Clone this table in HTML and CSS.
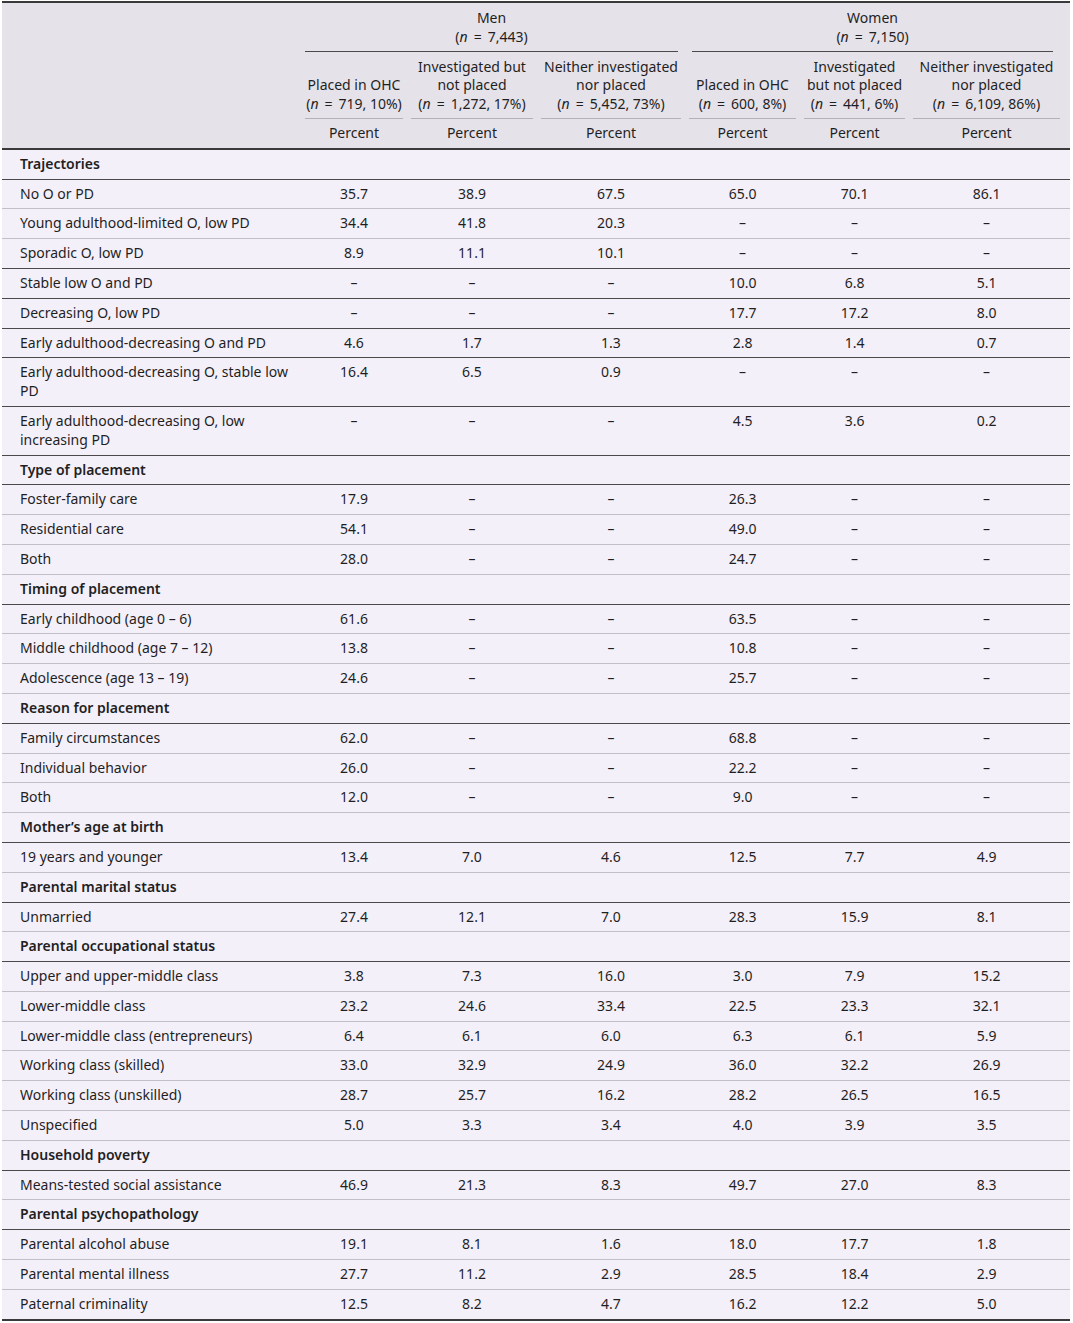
FILE: index.html
```html
<!DOCTYPE html>
<html lang="en">
<head>
    <meta charset="UTF-8">
    <meta name="viewport" content="width=device-width, initial-scale=1.0">
    <title>Trajectories by placement status</title>
    <link rel="stylesheet" href="styles.css">
</head>
<body>
    <table class="stats-table">
        <colgroup>
            <col class="col-label">
            <col class="col-a">
            <col class="col-b">
            <col class="col-c">
            <col class="col-d">
            <col class="col-e">
            <col class="col-f">
        </colgroup>
        <thead>
            <tr>
                <th class="label-head" rowspan="3"></th>
                <th class="group-head men" colspan="3"><div class="rule-dark">Men<br>(<i>n</i><span class="eq">=</span>7,443)</div></th>
                <th class="group-head women" colspan="3"><div class="rule-dark">Women<br>(<i>n</i><span class="eq">=</span>7,150)</div></th>
            </tr>
            <tr>
                <th class="sub-head"><div class="rule-light">Placed in OHC<br>(<i>n</i><span class="eq">=</span>719, 10%)</div></th>
                <th class="sub-head"><div class="rule-light">Investigated but<br>not placed<br>(<i>n</i><span class="eq">=</span>1,272, 17%)</div></th>
                <th class="sub-head"><div class="rule-light">Neither investigated<br>nor placed<br>(<i>n</i><span class="eq">=</span>5,452, 73%)</div></th>
                <th class="sub-head"><div class="rule-light">Placed in OHC<br>(<i>n</i><span class="eq">=</span>600, 8%)</div></th>
                <th class="sub-head"><div class="rule-light">Investigated<br>but not placed<br>(<i>n</i><span class="eq">=</span>441, 6%)</div></th>
                <th class="sub-head last"><div class="rule-light">Neither investigated<br>nor placed<br>(<i>n</i><span class="eq">=</span>6,109, 86%)</div></th>
            </tr>
            <tr class="unit-row">
                <th>Percent</th>
                <th>Percent</th>
                <th>Percent</th>
                <th>Percent</th>
                <th>Percent</th>
                <th class="last">Percent</th>
            </tr>
        </thead>
        <tbody id="tableBody">
            <!-- Rows are filled in below -->
        </tbody>
    </table>

    <script>
        // A string is a section heading, an array is a data row.
        // Rows flagged with "!" get the darker rule underneath.
        const rows = [
            'Trajectories',
            ['No O or PD', '35.7', '38.9', '67.5', '65.0', '70.1', '86.1'],
            ['Young adulthood-limited O, low PD', '34.4', '41.8', '20.3', '–', '–', '–'],
            ['!Sporadic O, low PD', '8.9', '11.1', '10.1', '–', '–', '–'],
            ['!Stable low O and PD', '–', '–', '–', '10.0', '6.8', '5.1'],
            ['!Decreasing O, low PD', '–', '–', '–', '17.7', '17.2', '8.0'],
            ['!Early adulthood-decreasing O and PD', '4.6', '1.7', '1.3', '2.8', '1.4', '0.7'],
            ['!Early adulthood-decreasing O, stable low PD', '16.4', '6.5', '0.9', '–', '–', '–'],
            ['!Early adulthood-decreasing O, low increasing PD', '–', '–', '–', '4.5', '3.6', '0.2'],
            'Type of placement',
            ['Foster-family care', '17.9', '–', '–', '26.3', '–', '–'],
            ['Residential care', '54.1', '–', '–', '49.0', '–', '–'],
            ['Both', '28.0', '–', '–', '24.7', '–', '–'],
            'Timing of placement',
            ['Early childhood (age 0 – 6)', '61.6', '–', '–', '63.5', '–', '–'],
            ['Middle childhood (age 7 – 12)', '13.8', '–', '–', '10.8', '–', '–'],
            ['Adolescence (age 13 – 19)', '24.6', '–', '–', '25.7', '–', '–'],
            'Reason for placement',
            ['Family circumstances', '62.0', '–', '–', '68.8', '–', '–'],
            ['Individual behavior', '26.0', '–', '–', '22.2', '–', '–'],
            ['Both', '12.0', '–', '–', '9.0', '–', '–'],
            'Mother’s age at birth',
            ['19 years and younger', '13.4', '7.0', '4.6', '12.5', '7.7', '4.9'],
            'Parental marital status',
            ['Unmarried', '27.4', '12.1', '7.0', '28.3', '15.9', '8.1'],
            'Parental occupational status',
            ['Upper and upper-middle class', '3.8', '7.3', '16.0', '3.0', '7.9', '15.2'],
            ['Lower-middle class', '23.2', '24.6', '33.4', '22.5', '23.3', '32.1'],
            ['Lower-middle class (entrepreneurs)', '6.4', '6.1', '6.0', '6.3', '6.1', '5.9'],
            ['Working class (skilled)', '33.0', '32.9', '24.9', '36.0', '32.2', '26.9'],
            ['Working class (unskilled)', '28.7', '25.7', '16.2', '28.2', '26.5', '16.5'],
            ['Unspecified', '5.0', '3.3', '3.4', '4.0', '3.9', '3.5'],
            'Household poverty',
            ['Means-tested social assistance', '46.9', '21.3', '8.3', '49.7', '27.0', '8.3'],
            'Parental psychopathology',
            ['Parental alcohol abuse', '19.1', '8.1', '1.6', '18.0', '17.7', '1.8'],
            ['Parental mental illness', '27.7', '11.2', '2.9', '28.5', '18.4', '2.9'],
            ['Paternal criminality', '12.5', '8.2', '4.7', '16.2', '12.2', '5.0']
        ];

        const tableBody = document.getElementById('tableBody');

        rows.forEach(row => {
            const tr = document.createElement('tr');

            if (typeof row === 'string') {
                tr.className = 'section-row';
                tr.innerHTML = `<td class="label" colspan="7">${row}</td>`;
                tableBody.appendChild(tr);
                return;
            }

            let label = row[0];
            if (label.startsWith('!')) {
                label = label.slice(1);
                tr.className = 'strong-rule';
            }

            const cells = row.slice(1).map((value, i) =>
                `<td class="value${i === 5 ? ' last' : ''}">${value}</td>`
            ).join('');

            tr.innerHTML = `<td class="label">${label}</td>${cells}`;
            tableBody.appendChild(tr);
        });
    </script>
</body>
</html>
```

FILE: styles.css
```css
body {
    font-family: "Noto Sans", "Open Sans", sans-serif;
    font-size: 14px;
    line-height: 18.8px;
    color: #1f1f1f;
    margin: 0;
    background-color: #fff;
}

.stats-table {
    width: 1068px;
    margin: 1px 0 0 2px;
    border-collapse: collapse;
    table-layout: fixed;
    background-color: #f4f0fa;
    border-top: 2px solid #3a3a3a;
    border-bottom: 2px solid #3a3a3a;
}

.col-label { width: 299px; }
.col-a { width: 106px; }
.col-b { width: 130px; }
.col-c { width: 148px; }
.col-d { width: 115px; }
.col-e { width: 109px; }
.col-f { width: 161px; }

/* header */

thead {
    background-color: #e6e2e9;
    border-bottom: 2px solid #3a3a3a;
}

th {
    font-weight: normal;
    text-align: center;
    vertical-align: bottom;
    padding: 0 4px;
}

th i {
    font-style: italic;
}

.eq {
    padding: 0 6px;
}

.group-head div,
.sub-head div {
    padding: 6px 0 4px;
}

.group-head.men {
    padding-right: 7px;
}

.group-head.women {
    padding-left: 7px;
    padding-right: 17px;
}

.sub-head.last,
.unit-row .last {
    padding-right: 10px;
}

.rule-dark {
    border-bottom: 1px solid #4a4a4a;
}

.rule-light {
    border-bottom: 1px solid #b4b2b8;
}

.unit-row th {
    padding-top: 5px;
    padding-bottom: 5px;
}

/* body */

td {
    padding: 5px 4px;
    vertical-align: top;
    border-bottom: 1px solid #c2c0c6;
}

td.label {
    padding-left: 18px;
    padding-right: 8px;
    text-align: left;
}

td.value {
    text-align: center;
}

td.value.last {
    padding-right: 10px;
}

tr.strong-rule td {
    border-bottom-color: #4a4a4a;
}

.section-row td {
    font-weight: 600;
    border-top: 1px solid #4a4a4a;
    border-bottom-color: #4a4a4a;
}

tbody tr:last-child td {
    border-bottom: none;
}
```
